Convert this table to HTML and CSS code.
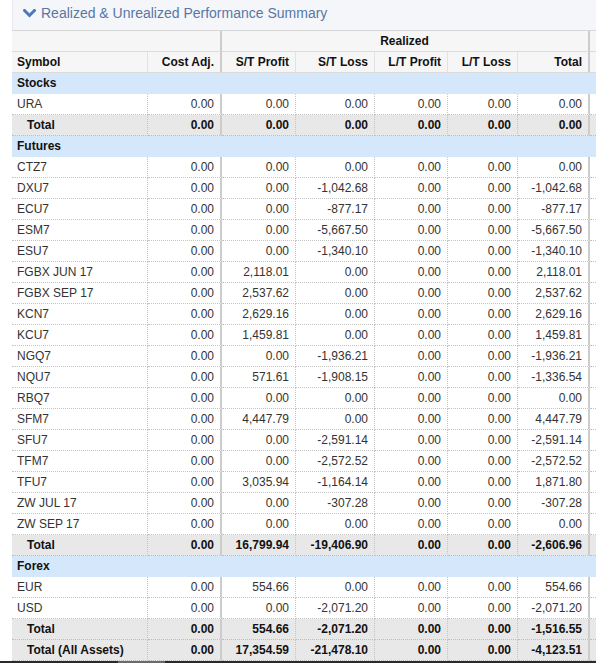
FILE: index.html
```html
<!DOCTYPE html>
<html>
<head>
<meta charset="utf-8">
<link rel="stylesheet" href="styles.css">
</head>
<body>
<div class="page">
  <div class="panel-head">
    <svg class="chev" width="13" height="9" viewBox="0 0 13 9"><polyline points="1.5,1.5 6.5,6.5 11.5,1.5" fill="none" stroke="#4a78b8" stroke-width="3" stroke-linecap="square"/></svg>
    <span class="panel-title">Realized &amp; Unrealized Performance Summary</span>
  </div>
  <table class="grid">
    <colgroup>
      <col class="c-sym"><col class="c-cost"><col class="c-stp"><col class="c-stl"><col class="c-ltp"><col class="c-ltl"><col class="c-tot"><col class="c-more">
    </colgroup>
    <thead>
      <tr class="h1">
        <th colspan="2" class="sep"></th>
        <th colspan="5" class="center sep">Realized</th>
        <th></th>
      </tr>
      <tr class="h2">
        <th class="left">Symbol</th>
        <th class="sep">Cost Adj.</th>
        <th>S/T Profit</th>
        <th>S/T Loss</th>
        <th>L/T Profit</th>
        <th>L/T Loss</th>
        <th class="sep">Total</th>
        <th></th>
      </tr>
    </thead>
    <tbody>
      <tr class="grp"><td colspan="8">Stocks</td></tr>
      <tr><td>URA</td><td class="sep">0.00</td><td>0.00</td><td>0.00</td><td>0.00</td><td>0.00</td><td class="sep">0.00</td><td></td></tr>
      <tr class="tot"><td>Total</td><td class="sep">0.00</td><td>0.00</td><td>0.00</td><td>0.00</td><td>0.00</td><td class="sep">0.00</td><td></td></tr>

      <tr class="grp"><td colspan="8">Futures</td></tr>
      <tr><td>CTZ7</td><td class="sep">0.00</td><td>0.00</td><td>0.00</td><td>0.00</td><td>0.00</td><td class="sep">0.00</td><td></td></tr>
      <tr><td>DXU7</td><td class="sep">0.00</td><td>0.00</td><td>-1,042.68</td><td>0.00</td><td>0.00</td><td class="sep">-1,042.68</td><td></td></tr>
      <tr><td>ECU7</td><td class="sep">0.00</td><td>0.00</td><td>-877.17</td><td>0.00</td><td>0.00</td><td class="sep">-877.17</td><td></td></tr>
      <tr><td>ESM7</td><td class="sep">0.00</td><td>0.00</td><td>-5,667.50</td><td>0.00</td><td>0.00</td><td class="sep">-5,667.50</td><td></td></tr>
      <tr><td>ESU7</td><td class="sep">0.00</td><td>0.00</td><td>-1,340.10</td><td>0.00</td><td>0.00</td><td class="sep">-1,340.10</td><td></td></tr>
      <tr><td>FGBX JUN 17</td><td class="sep">0.00</td><td>2,118.01</td><td>0.00</td><td>0.00</td><td>0.00</td><td class="sep">2,118.01</td><td></td></tr>
      <tr><td>FGBX SEP 17</td><td class="sep">0.00</td><td>2,537.62</td><td>0.00</td><td>0.00</td><td>0.00</td><td class="sep">2,537.62</td><td></td></tr>
      <tr><td>KCN7</td><td class="sep">0.00</td><td>2,629.16</td><td>0.00</td><td>0.00</td><td>0.00</td><td class="sep">2,629.16</td><td></td></tr>
      <tr><td>KCU7</td><td class="sep">0.00</td><td>1,459.81</td><td>0.00</td><td>0.00</td><td>0.00</td><td class="sep">1,459.81</td><td></td></tr>
      <tr><td>NGQ7</td><td class="sep">0.00</td><td>0.00</td><td>-1,936.21</td><td>0.00</td><td>0.00</td><td class="sep">-1,936.21</td><td></td></tr>
      <tr><td>NQU7</td><td class="sep">0.00</td><td>571.61</td><td>-1,908.15</td><td>0.00</td><td>0.00</td><td class="sep">-1,336.54</td><td></td></tr>
      <tr><td>RBQ7</td><td class="sep">0.00</td><td>0.00</td><td>0.00</td><td>0.00</td><td>0.00</td><td class="sep">0.00</td><td></td></tr>
      <tr><td>SFM7</td><td class="sep">0.00</td><td>4,447.79</td><td>0.00</td><td>0.00</td><td>0.00</td><td class="sep">4,447.79</td><td></td></tr>
      <tr><td>SFU7</td><td class="sep">0.00</td><td>0.00</td><td>-2,591.14</td><td>0.00</td><td>0.00</td><td class="sep">-2,591.14</td><td></td></tr>
      <tr><td>TFM7</td><td class="sep">0.00</td><td>0.00</td><td>-2,572.52</td><td>0.00</td><td>0.00</td><td class="sep">-2,572.52</td><td></td></tr>
      <tr><td>TFU7</td><td class="sep">0.00</td><td>3,035.94</td><td>-1,164.14</td><td>0.00</td><td>0.00</td><td class="sep">1,871.80</td><td></td></tr>
      <tr><td>ZW JUL 17</td><td class="sep">0.00</td><td>0.00</td><td>-307.28</td><td>0.00</td><td>0.00</td><td class="sep">-307.28</td><td></td></tr>
      <tr><td>ZW SEP 17</td><td class="sep">0.00</td><td>0.00</td><td>0.00</td><td>0.00</td><td>0.00</td><td class="sep">0.00</td><td></td></tr>
      <tr class="tot"><td>Total</td><td class="sep">0.00</td><td>16,799.94</td><td>-19,406.90</td><td>0.00</td><td>0.00</td><td class="sep">-2,606.96</td><td></td></tr>

      <tr class="grp"><td colspan="8">Forex</td></tr>
      <tr><td>EUR</td><td class="sep">0.00</td><td>554.66</td><td>0.00</td><td>0.00</td><td>0.00</td><td class="sep">554.66</td><td></td></tr>
      <tr><td>USD</td><td class="sep">0.00</td><td>0.00</td><td>-2,071.20</td><td>0.00</td><td>0.00</td><td class="sep">-2,071.20</td><td></td></tr>
      <tr class="tot"><td>Total</td><td class="sep">0.00</td><td>554.66</td><td>-2,071.20</td><td>0.00</td><td>0.00</td><td class="sep">-1,516.55</td><td></td></tr>
      <tr class="tot"><td>Total (All Assets)</td><td class="sep">0.00</td><td>17,354.59</td><td>-21,478.10</td><td>0.00</td><td>0.00</td><td class="sep">-4,123.51</td><td></td></tr>
    </tbody>
  </table>
  <div class="bottom-bar"><div class="thumb"></div></div>
</div>
</body>
</html>
```

FILE: styles.css
```css
html, body {
  margin: 0;
  padding: 0;
  background: #ffffff;
  overflow: hidden;
}
body {
  width: 596px;
  height: 663px;
  font-family: "Liberation Sans", Arial, sans-serif;
}
.page {
  width: 596px;
  height: 663px;
  overflow: hidden;
  position: relative;
}
.panel-head {
  margin-left: 12px;
  height: 30px;
  background: #f4f6f9;
  border-left: 1px solid #e6e9ee;
  display: flex;
  align-items: center;
  padding-left: 10px;
  box-sizing: border-box;
  padding-bottom: 5px;
}
.chev {
  display: block;
  margin-right: 5px;
  margin-top: 2px;
}
.panel-title {
  font-size: 14px;
  color: #5876a6;
  line-height: 18px;
}
.grid {
  margin-left: 12px;
  border-collapse: separate;
  border-spacing: 0;
  table-layout: fixed;
  width: 664px;
  font-size: 12px;
  color: #333333;
  border-top: 1px solid #d6d6d6;
}
.c-sym { width: 136px; }
.c-cost { width: 74px; }
.c-stp { width: 74px; }
.c-stl { width: 79px; }
.c-ltp { width: 73px; }
.c-ltl { width: 70px; }
.c-tot { width: 72px; }
.c-more { width: 86px; }

.grid th, .grid td {
  padding: 0 6px 0 5px;
  line-height: 20px;
  white-space: nowrap;
  overflow: hidden;
  text-align: right;
}
.grid th {
  background: #f6f6f6;
  color: #111111;
  font-weight: bold;
  border-bottom: 1px solid #dcdcdc;
  border-right: 1px solid #e2e2e2;
}
.grid th.left { text-align: left; }
.grid th.center { text-align: center; }
.grid td {
  border-bottom: 1px dotted #c4c4c4;
  border-right: 1px dotted #c4c4c4;
}
.grid td:first-child { text-align: left; }
.grid th.sep, .grid td.sep {
  border-right: 2px solid #cccccc;
}
.grid tr.grp td {
  background: #d5e7fb;
  color: #111111;
  font-weight: bold;
  text-align: left;
  border-right: none;
  border-bottom: 1px solid #d5e7fb;
}
.grid tr.tot td {
  background: #e8e8e8;
  color: #111111;
  font-weight: bold;
  border-bottom: 1px dotted #bdbdbd;
}
.grid tr.tot td:first-child {
  padding-left: 15px;
}
.bottom-bar {
  height: 2px;
  margin-top: 0;
  background: #2a2a2a;
  position: relative;
}
.thumb {
  position: absolute;
  left: 118px;
  top: 0;
  width: 47px;
  height: 2px;
  background: #6a6a6a;
}
```
